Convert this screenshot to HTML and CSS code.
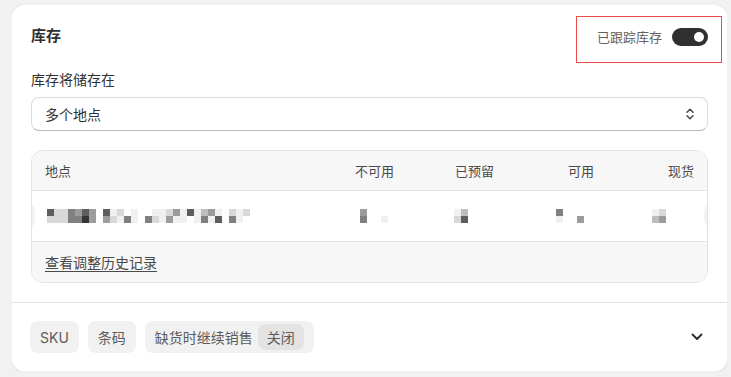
FILE: index.html
```html
<!DOCTYPE html>
<html lang="zh-CN">
<head>
<meta charset="utf-8">
<title>库存</title>
<link rel="stylesheet" href="styles.css">
</head>
<body>
<div class="card">
  <div class="main">
    <div class="head">
      <h2 class="title">库存</h2>
      <div class="track">
        <span class="track-label">已跟踪库存</span>
        <span class="toggle"><span class="knob"></span></span>
      </div>
    </div>
    <div class="label">库存将储存在</div>
    <div class="select">
      <span>多个地点</span>
      <svg class="updown" width="10" height="14" viewBox="0 0 10 14"><path d="M2 5.2 L5 2.2 L8 5.2 M2 8.8 L5 11.8 L8 8.8" fill="none" stroke="#4a4a4a" stroke-width="1.5" stroke-linecap="round" stroke-linejoin="round"/></svg>
    </div>
    <div class="table">
      <div class="trow thead">
        <div class="cell first">地点</div>
        <div class="cell num">不可用</div>
        <div class="cell num">已预留</div>
        <div class="cell num">可用</div>
        <div class="cell num">现货</div>
      </div>
      <div class="trow tbody">
        <div class="cell first">
          <span class="mosaic">
            <i class="k6"></i><i class="k2"></i>
            <i class="k2"></i><i class="k2"></i>
            <i class="k2"></i><i class="k2"></i>
            <i class="k5"></i><i class="k5"></i>
            <i class="k4"></i><i class="k5"></i>
            <i class="k6"></i><i class="k7"></i>
            <i class="k4"></i><i class="k4"></i>
            <i class="k0"></i><i class="k0"></i>
            <i class="k6"></i><i class="k4"></i>
            <i class="k1"></i><i class="k2"></i>
            <i class="k2"></i><i class="k1"></i>
            <i class="k0"></i><i class="k5"></i>
            <i class="k1"></i><i class="k1"></i>
            <i class="k0"></i><i class="k0"></i>
            <i class="k0"></i><i class="k5"></i>
            <i class="k1"></i><i class="k2"></i>
            <i class="k1"></i><i class="k1"></i>
            <i class="k2"></i><i class="k4"></i>
            <i class="k4"></i><i class="k1"></i>
            <i class="k1"></i><i class="k1"></i>
            <i class="k6"></i><i class="k0"></i>
            <i class="k1"></i><i class="k1"></i>
            <i class="k3"></i><i class="k5"></i>
            <i class="k4"></i><i class="k1"></i>
            <i class="k1"></i><i class="k6"></i>
            <i class="k0"></i><i class="k0"></i>
            <i class="k2"></i><i class="k5"></i>
            <i class="k1"></i><i class="k1"></i>
            <i class="k2"></i><i class="k0"></i>
          </span>
        </div>
        <div class="cell m1">
          <span class="mosaic">
            <i class="k4"></i><i class="k5"></i>
            <i class="k0"></i><i class="k0"></i>
            <i class="k0"></i><i class="k0"></i>
            <i class="k0"></i><i class="k1"></i>
          </span>
        </div>
        <div class="cell m2">
          <span class="mosaic">
            <i class="k1"></i><i class="k2"></i>
            <i class="k3"></i><i class="k6"></i>
          </span>
        </div>
        <div class="cell m3">
          <span class="mosaic">
            <i class="k5"></i><i class="k1"></i>
            <i class="k0"></i><i class="k0"></i>
            <i class="k0"></i><i class="k0"></i>
            <i class="k0"></i><i class="k4"></i>
          </span>
        </div>
        <div class="cell m4">
          <span class="mosaic">
            <i class="k1"></i><i class="k3"></i>
            <i class="k2"></i><i class="k4"></i>
          </span>
        </div>
      </div>
      <div class="tfoot">
        <a class="history" href="#">查看调整历史记录</a>
      </div>
    </div>
  </div>
  <div class="foot">
    <div class="pills">
      <span class="pill">SKU</span>
      <span class="pill">条码</span>
      <span class="pill">缺货时继续销售<span class="inner">关闭</span></span>
    </div>
    <svg class="down" width="12" height="8" viewBox="0 0 12 8"><path d="M1.5 1.5 L6 6 L10.5 1.5" fill="none" stroke="#303030" stroke-width="2" stroke-linecap="round" stroke-linejoin="round"/></svg>
  </div>
  <div class="annot"></div>
</div>
</body>
</html>
```

FILE: styles.css
```css
* { box-sizing: border-box; }
html, body { background: #f1f1f1; }
body {
  margin: 5px 4px 0 12px;
  font-family: Inter, "Noto Sans CJK SC", sans-serif;
  color: #303030;
}
.card {
  position: relative;
  background: #fff;
  border-radius: 12px;
  box-shadow: 0 0 0 1px #e6e6e6, 0 1px 1px 0 rgba(0,0,0,0.18);
}
.main { padding: 19px 19px 19px 19px; }
.head {
  display: flex;
  align-items: center;
  justify-content: space-between;
  height: 24px;
}
.title {
  margin: 0;
  font-size: 15px;
  font-weight: 600;
  line-height: 24px;
}
.track { display: flex; align-items: center; gap: 10px; padding-top: 1px; }
.track-label { font-size: 13px; color: #616161; line-height: 18px; }
.toggle {
  display: flex;
  align-items: center;
  justify-content: flex-end;
  width: 36px;
  height: 18px;
  border-radius: 9px;
  background: #303030;
  padding-right: 4px;
}
.knob { width: 10px; height: 10px; border-radius: 50%; background: #fff; }
.label {
  margin-top: 22px;
  font-size: 14px;
  line-height: 20px;
}
.select {
  margin-top: 7px;
  height: 34px;
  border: 1px solid #dcdcdc;
  border-bottom-color: #b8b8b8;
  border-radius: 8px;
  display: flex;
  align-items: center;
  justify-content: space-between;
  padding: 0 12px 1px 13px;
  font-size: 14px;
}
.updown { display: block; }
.table {
  margin-top: 19px;
  border: 1px solid #e3e3e3;
  border-radius: 12px;
  overflow: hidden;
}
.trow {
  display: grid;
  grid-template-columns: 1fr 100px 100px 100px 100px;
  padding: 0 13px;
  align-items: center;
}
.thead {
  height: 40px;
  background: #f7f7f7;
  border-bottom: 1px solid #e3e3e3;
  font-size: 13px;
  color: #4a4a4a;
}
.num { text-align: right; }
.tbody {
  position: relative;
  height: 51px;
  border-bottom: 1px solid #e3e3e3;
}
.tbody::before, .tbody::after {
  content: "";
  position: absolute;
  top: 14px;
  width: 8px;
  height: 22px;
  border-radius: 50%;
  background: #f2f2f2;
}
.tbody::before { left: -5px; }
.tbody::after { right: -5px; }
.mosaic {
  display: inline-grid;
  grid-auto-flow: column;
  grid-template-rows: 7px 7px;
  grid-auto-columns: 7px;
  vertical-align: middle;
}
.first .mosaic { margin-left: 2px; }
.m1 { padding-left: 66px; }
.m2 { padding-left: 60px; }
.m3 { padding-left: 62px; }
.m4 { padding-left: 58px; }
.cell { display: flex; align-items: center; }
.thead .num { justify-content: flex-end; }
.mosaic i { display: block; }
.k0 { background: #ffffff; }
.k1 { background: #f0f0f0; }
.k2 { background: #d8d8d8; }
.k3 { background: #bdbdbd; }
.k4 { background: #9c9c9c; }
.k5 { background: #808080; }
.k6 { background: #5e5e5e; }
.k7 { background: #363636; }
.tfoot {
  height: 40px;
  background: #f7f7f7;
  display: flex;
  align-items: center;
  padding: 0 13px;
}
.history {
  font-size: 14px;
  color: #4a4a4a;
  text-decoration: underline;
  text-underline-offset: 3px;
}
.foot {
  border-top: 1px solid #e3e3e3;
  padding: 18px 24px 18px 18px;
  display: flex;
  align-items: center;
  justify-content: space-between;
}
.pills { display: flex; gap: 9px; }
.pill {
  display: flex;
  align-items: center;
  height: 32px;
  padding: 0 10px;
  border-radius: 8px;
  background: #f1f1f1;
  font-size: 14px;
  color: #5c5c5c;
}
.inner {
  margin-left: 5px;
  height: 26px;
  display: flex;
  align-items: center;
  padding: 0 9px;
  border-radius: 8px;
  background: #e3e3e3;
}
.down { display: block; }
.annot {
  position: absolute;
  left: 564px;
  top: 11px;
  width: 146px;
  height: 47px;
  border: 1px solid #ee4b4b;
}
```
